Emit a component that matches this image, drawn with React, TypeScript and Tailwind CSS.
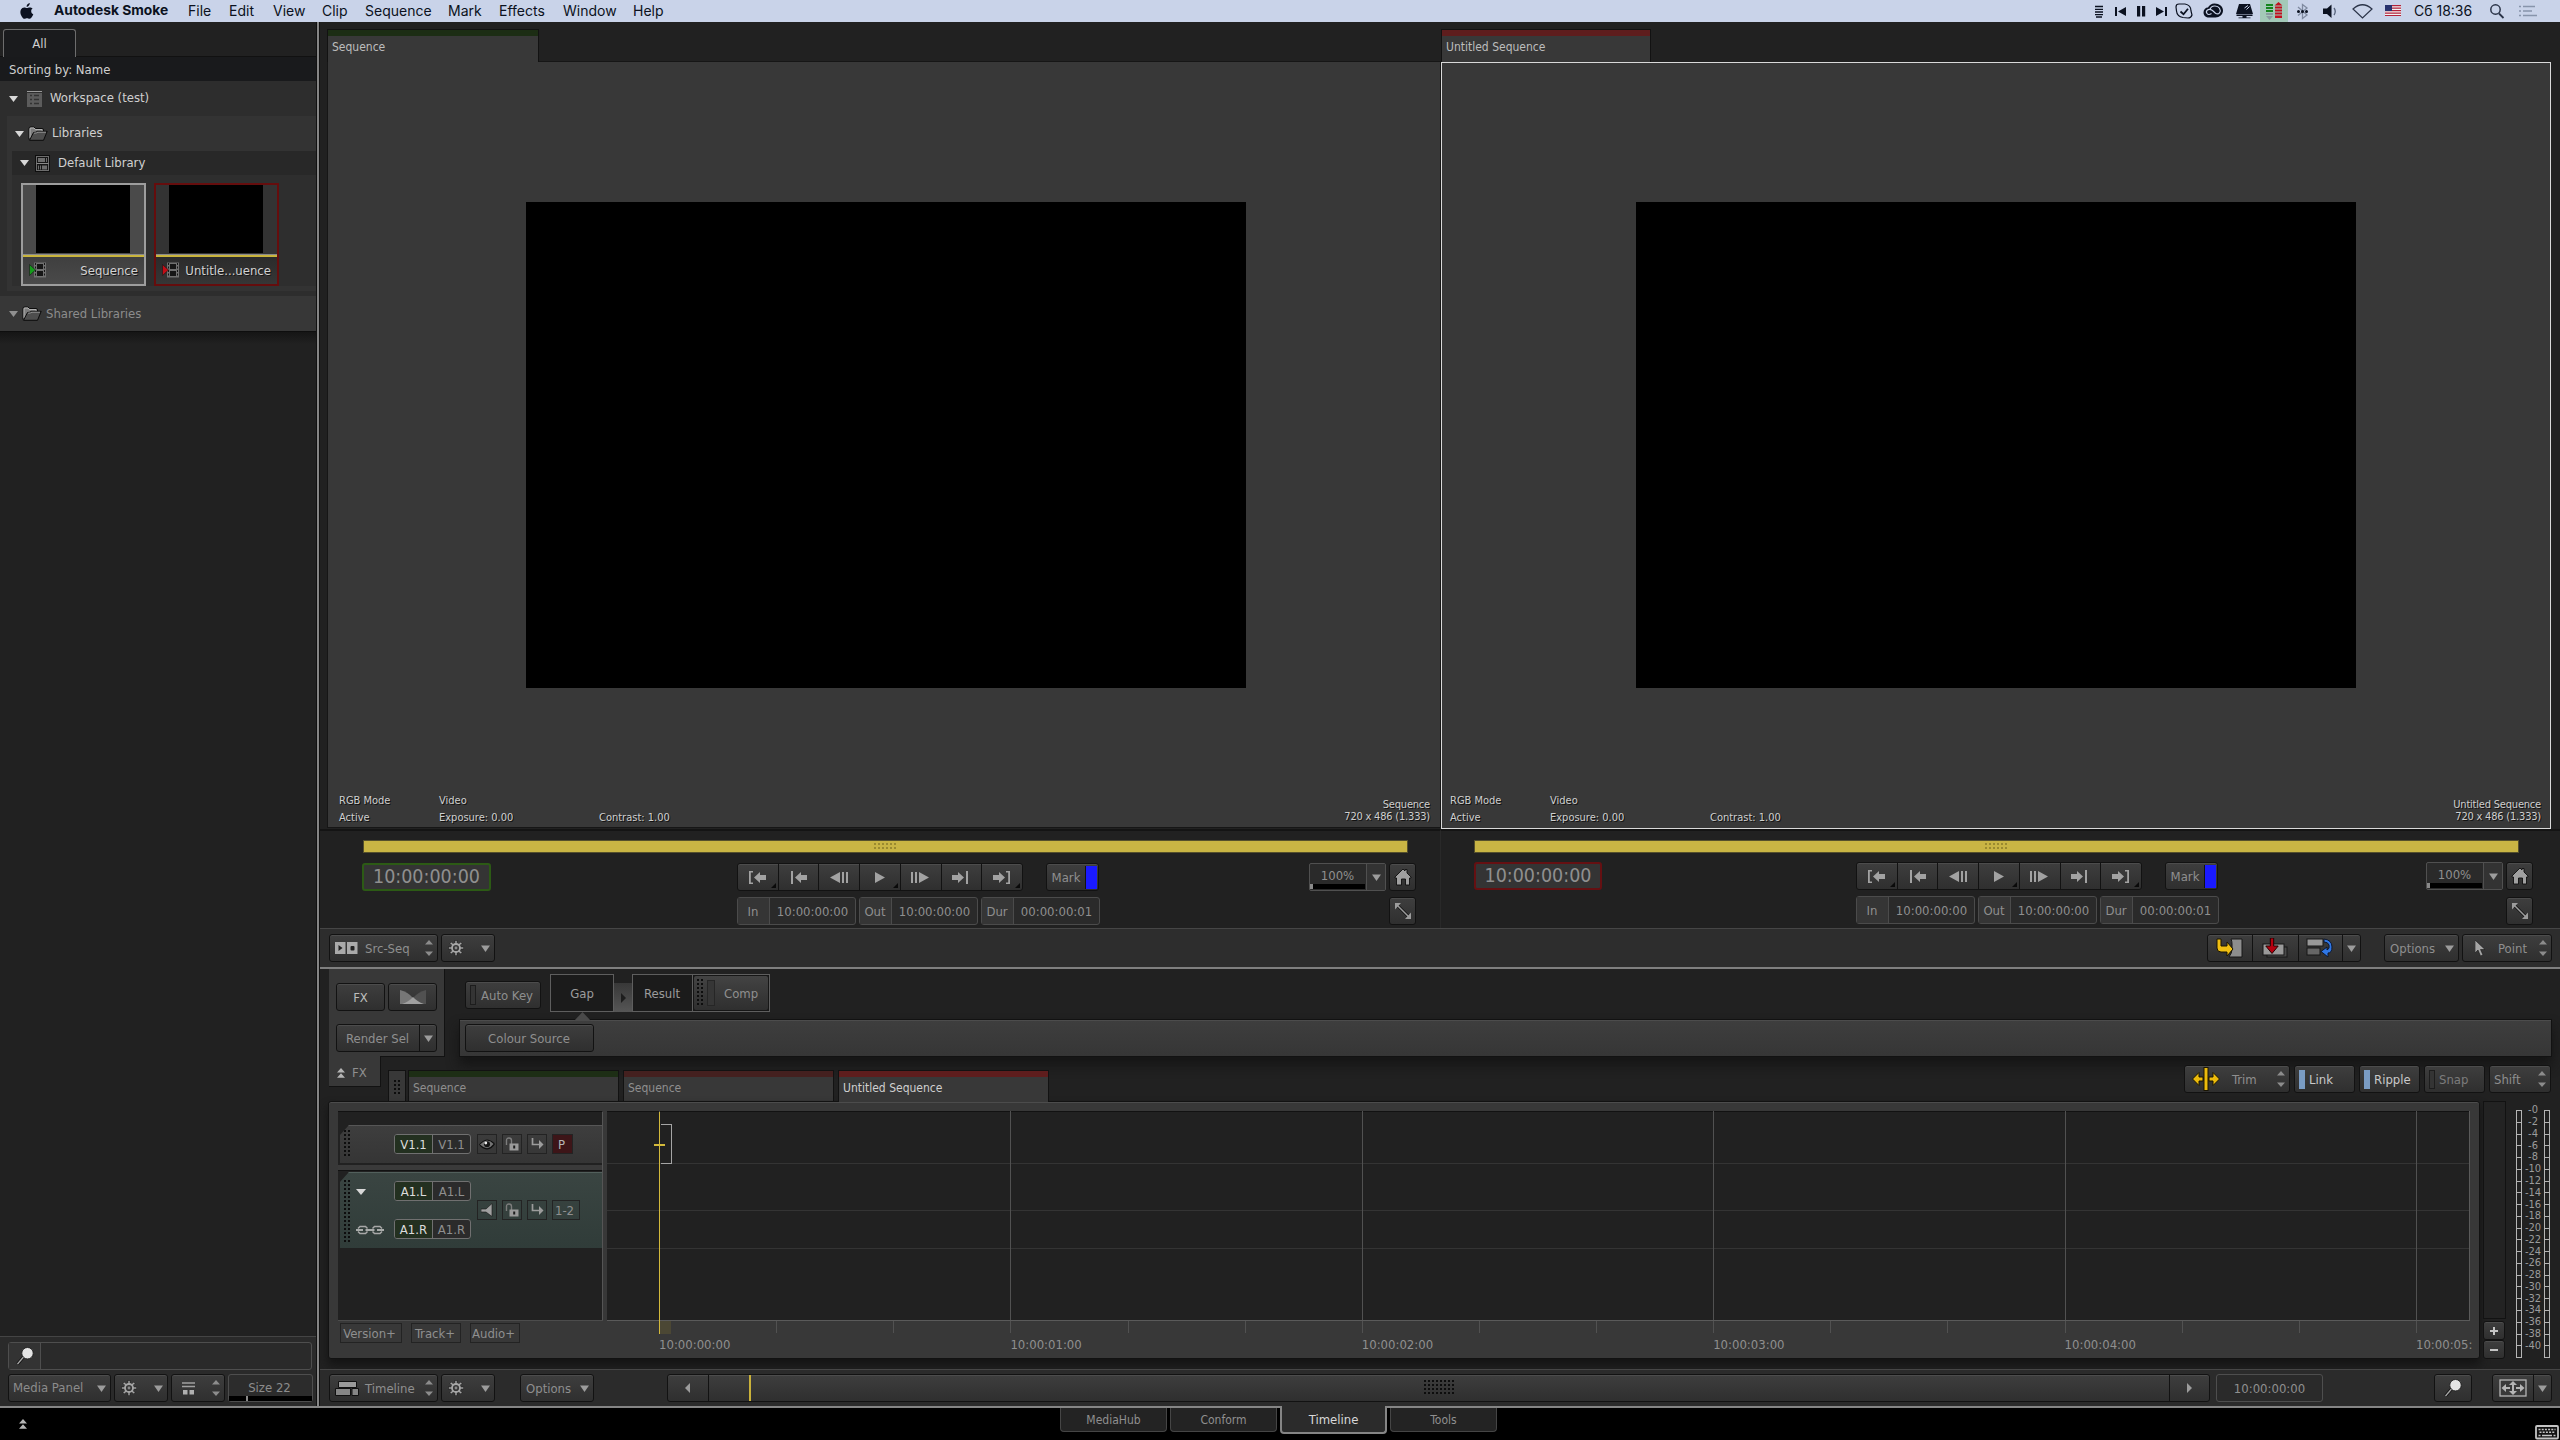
import type { ReactNode } from 'react';
import clsx from 'clsx';

const MENU: [string, string][] = [
  ['File', 'w-[41px]'],
  ['Edit', 'w-[44px]'],
  ['View', 'w-[49px]'],
  ['Clip', 'w-[43px]'],
  ['Sequence', 'w-[83px]'],
  ['Mark', 'w-[51px]'],
  ['Effects', 'w-[64px]'],
  ['Window', 'w-[70px]'],
  ['Help', 'w-[60px]'],
];

const METER = Array.from({ length: 21 }, (_, i) => `-${i * 2}`);
const SECONDS = ['10:00:00:00', '10:00:01:00', '10:00:02:00', '10:00:03:00', '10:00:04:00', '10:00:05:'];
const SECOND_W = 351.4;
const ORIGIN = 52;

/* ---------- primitives ---------- */

function Btn({ className, children }: { className?: string; children?: ReactNode }) {
  return (
    <div
      className={clsx(
        'flex items-center shrink-0 h-7 rounded-[3px] border border-[#121212] bg-linear-to-b from-[#3e3e3e] to-[#2f2f2f] shadow-[inset_0_1px_0_#4c4c4c]',
        className,
      )}
    >
      {children}
    </div>
  );
}

function Down({ className }: { className?: string }) {
  return (
    <svg className={clsx('shrink-0', className)} width="9" height="7" viewBox="0 0 9 7">
      <path d="M0 0.5h9L4.500 7z" fill="#9c9c9c" />
    </svg>
  );
}

function UpDown({ className }: { className?: string }) {
  return (
    <svg className={clsx('shrink-0', className)} width="8" height="16" viewBox="0 0 8 16">
      <path d="M4 0l4 4.500H0zM4 16l4-4.500H0z" fill="#8c8c8c" />
    </svg>
  );
}

function DoubleUp() {
  return (
    <svg className="shrink-0" width="8" height="10" viewBox="0 0 8 10">
      <path d="M4 0l4 4.500H0zM4 5.200l4 4.500H0z" fill="#b5b5b5" />
    </svg>
  );
}

function Gear() {
  const spokes = [0, 45, 90, 135, 180, 225, 270, 315];
  return (
    <svg className="shrink-0" width="16" height="16" viewBox="0 0 16 16">
      <g fill="#a6a6a6" stroke="#141414" strokeWidth="0.5">
        {spokes.map(a => (
          <rect key={a} x="7" y="0.5" width="2" height="4" transform={`rotate(${a} 8 8)`} />
        ))}
      </g>
      <circle cx="8" cy="8" r="4" fill="none" stroke="#a6a6a6" strokeWidth="1.800" />
      <circle cx="8" cy="8" r="1.400" fill="#8a8a8a" />
    </svg>
  );
}

function GearMenu({ className }: { className?: string }) {
  return (
    <Btn className={clsx('w-[54px] pl-[6px] pr-[4px] justify-between', className)}>
      <Gear />
      <Down />
    </Btn>
  );
}

function Dots({ cols, rows, gap = 4, color = '#0d0d0d', className }: { cols: number; rows: number; gap?: number; color?: string; className?: string }) {
  const cells = [];
  for (let y = 0; y < rows; y++) {
    for (let x = 0; x < cols; x++) {
      cells.push(<rect key={`${x}-${y}`} x={x * gap} y={y * gap} width="2" height="2" fill={color} />);
    }
  }
  return (
    <svg className={clsx('shrink-0', className)} width={cols * gap} height={rows * gap}>
      {cells}
    </svg>
  );
}

function Magnifier() {
  return (
    <svg className="shrink-0" width="18" height="18" viewBox="0 0 18 18">
      <path d="M1.500 17L7.500 10" stroke="#111" strokeWidth="3" />
      <path d="M1.500 17L7.500 10" stroke="#a8a8a8" strokeWidth="1.300" />
      <circle cx="11.500" cy="6.200" r="5.700" fill="#e4e4e4" stroke="#161616" strokeWidth="0.8" />
    </svg>
  );
}

function Folder() {
  return (
    <svg className="shrink-0" width="20" height="15" viewBox="0 0 20 15">
      <path d="M1 13.500V2.500Q1 1 2.500 1H6l1.500 1.500H14q1.500 0 1.500 1.500v2" fill="#7d7d7d" stroke="#0c0c0c" />
      <path d="M2 12V3q0-1 1-1h3l1.500 1.600H14v1.500" fill="none" stroke="#bdbdbd" strokeWidth="0.9" />
      <path d="M1.500 14.300L5.500 6.500q2.500 0 4-1.200h9.700l-3.700 9z" fill="#4e4e4e" stroke="#0c0c0c" />
      <path d="M6 7.200q2.500 0 4-1h8" fill="none" stroke="#a5a5a5" strokeWidth="0.8" />
    </svg>
  );
}

/* ---------- menu bar ---------- */

function MenuBar() {
  return (
    <div className="h-[22px] shrink-0 flex items-center bg-[#c9d3e9] font-['Inter','Roboto',sans-serif] text-[14px] leading-none text-[#0b1120]">
      <svg className="ml-[20px] shrink-0" width="14" height="17" viewBox="0 0 14 17">
        <path
          d="M9.800 0c.1 1-.3 1.900-.9 2.600C8.300 3.400 7.400 3.900 6.600 3.800 6.500 2.900 6.900 2 7.500 1.300 8.100.6 9 .1 9.800 0zM12.600 5.600C11.700 6.200 11.200 7.100 11.200 8.200c0 1.500.9 2.500 2.100 3-.3.9-.7 1.800-1.300 2.600-.7 1-1.400 2-2.500 2-1 0-1.300-.6-2.500-.6s-1.600.6-2.500.6c-1.100 0-1.900-1-2.600-2.100C.4 11.500-.2 8.500 1 6.400 1.700 5.200 2.900 4.400 4.200 4.400c1.100 0 1.900.7 2.800.7.800 0 1.700-.8 3-.7.600 0 1.800.2 2.600 1.200z"
          fill="#0b1120"
        />
      </svg>
      <span className="ml-[20px] w-[134px] shrink-0 font-bold text-[13.8px]">Autodesk Smoke</span>
      {MENU.map(([label, w]) => (
        <span key={label} className={clsx('shrink-0', w)}>{label}</span>
      ))}
      <svg className="ml-auto shrink-0" width="319" height="22" viewBox="0 0 319 22">
        <path d="M0 6.500h8M0 9.300h8M0 12h8M0 14.700h8M1 17h6" stroke="#0b1120" strokeWidth="1.300" />
        <path d="M20 7h2v9h-2zM31 7v9l-8-4.500zM42 6h3.200v10.500H42zM47 6h3.200v10.500H47zM61 7v9l8-4.500zM70 7h2v9h-2z" fill="#0b1120" />
        <path d="M84 4h6q6 1 6 7l1 4q-1 3-4 3l-5-.5q-6-1-6.500-6.500L81 7q0-3 3-3z" fill="none" stroke="#0b1120" strokeWidth="1.200" />
        <path d="M85.500 11.500l3 2.700 4.500-5.500" fill="none" stroke="#0b1120" strokeWidth="1.800" />
        <path d="M108.500 12.500c0-3 2-5 4.500-5 1-2 3.500-4 6.500-4 5 0 8.500 3 8.500 7s-3.500 7-7.500 7H114c-3 0-5.500-2-5.500-5z" fill="#0b1120" />
        <g fill="none" stroke="#c9d3e9" strokeWidth="1.200">
          <path d="M116.500 13.500q-3 2-4.500 0t.5-3.500 5 .5l3 2.800q2.500 1.500 4-.5t0-4.500-5-2.300-4.500 3.500" />
        </g>
        <path d="M144 4h11l3 10h-17zM141.500 14.500h16v1.500h-6v1.500h4v.8h-12v-.8h4V16h-6z" fill="#0b1120" />
        <path d="M149.500 8l3.500-2.500M151.500 9.500l3-3" stroke="#c9d3e9" />
        <rect x="165" width="28" height="22" fill="#a3c9b8" />
        <g fill="#15851d">
          <rect x="171" y="4" width="7" height="2" />
          <rect x="171" y="7" width="7" height="2" />
          <rect x="171" y="10" width="7" height="2" />
        </g>
        <path d="M171 13h7v2h-7zM171 16h7l-3.500 4z" fill="#8a9aa0" />
        <path d="M183.500 2l4 3.500h-8zM180 6.500h7v2h-7zM180 9.500h7v2h-7zM180 12.500h7v2h-7zM180 15.500h7v2.500h-7z" fill="#c20f1f" />
        <path d="M203 7l9 8-4.500 3.500v-14L212 8l-9 7.500" fill="none" stroke="#7f8aa0" strokeWidth="1.300" />
        <g fill="#0b1120">
          <circle cx="203.500" cy="11.500" r="1.500" />
          <circle cx="207.500" cy="11.500" r="1.500" />
          <circle cx="211.500" cy="11.500" r="1.500" />
          <path d="M228 8.500h4l4.500-4v13.500l-4.500-4h-4z" />
        </g>
        <path d="M239 8q2.500 3.500 0 7" fill="none" stroke="#56627a" strokeWidth="1.300" />
        <path d="M258 9q9.500-8.500 19 0l-9.500 9z" fill="none" stroke="#2b3448" strokeWidth="1.200" />
        <rect x="290" y="5" width="16" height="11" fill="#f2f2f2" />
        <path d="M290 5.700h16M290 8.200h16M290 10.700h16M290 13.100h16M290 15.500h16" stroke="#b3213a" strokeWidth="1.200" />
        <rect x="290" y="5" width="7" height="6" fill="#27326e" />
      </svg>
      <span className="w-[76px] shrink-0">Сб 18:36</span>
      <svg className="mr-[6px] shrink-0" width="64" height="22" viewBox="0 0 64 22">
        <circle cx="5.500" cy="9.500" r="4.700" fill="none" stroke="#2b3448" strokeWidth="1.500" />
        <path d="M9 13.500l4.500 4.500" stroke="#2b3448" strokeWidth="1.800" />
        <path d="M29 6.500h2M33 6.500h12M29 11h2M33 11h9M29 15.500h2M33 15.500h14" stroke="#8794ab" strokeWidth="1.700" />
      </svg>
    </div>
  );
}

/* ---------- media panel ---------- */

function Thumb({ name, selected }: { name: string; selected?: boolean }) {
  return (
    <div className={clsx('w-[125px] h-[103px] border-2 flex flex-col', selected ? 'border-[#9d9d9d] bg-[#4a4a4a]' : 'border-[#650d0d] bg-[#333333]')}>
      <div className="h-[68px] pl-[13px] pr-[14px]">
        <div className="h-full bg-black" />
      </div>
      <div className="h-[3px] mt-px border-t border-[#8a8a8a] bg-[#c9b43c]" />
      <div className={clsx('flex-1 flex items-center pl-[6px] pr-[6px] pb-px text-[13px] leading-none text-[#d2d2d2] [text-shadow:1px_1px_0_#161616]', selected ? 'bg-linear-to-b from-[#3f3f3f] to-[#4a4a4a]' : 'bg-linear-to-b from-[#2b2b2b] to-[#363636]')}>
        <svg className="shrink-0" width="17" height="16" viewBox="0 0 17 16">
          <rect x="5" y="0.5" width="12" height="15" fill="#707070" />
          <rect x="8" y="2" width="6" height="5" fill="#161616" />
          <rect x="8" y="9" width="6" height="5" fill="#161616" />
          <path d="M6.500 1v14M15.500 1v14" stroke="#161616" strokeDasharray="2 1.500" />
          <path d="M0.500 2.500v11L6.500 8z" fill={selected ? '#169a1c' : '#c20d16'} stroke="#161616" strokeWidth="0.6" />
        </svg>
        <span className="ml-auto">{name}</span>
      </div>
    </div>
  );
}

function Sidebar() {
  return (
    <div className="w-[317px] shrink-0 flex flex-col border-r border-[#111] bg-[#212121] text-[13px] text-[#d0d0d0]">
      <div className="h-[35px] shrink-0 flex items-end pl-[3px] border-b border-[#111]">
        <div className="w-[73px] h-[28px] -mb-px pt-px flex items-center justify-center rounded-t-[3px] border border-b-0 border-[#6d6d6d] bg-[#1a1b1d]">All</div>
      </div>
      <div className="h-[24px] shrink-0 flex items-center pl-[9px] pt-px bg-[#191a1c]">Sorting by: Name</div>
      <div className="h-[215px] shrink-0 flex flex-col bg-[#2d2d2d]">
        <div className="h-[35px] flex items-center pl-[9px]">
          <svg width="9" height="6"><path d="M0 0h9L4.500 6z" fill="#d8d8d8" /></svg>
          <svg className="ml-[9px]" width="15" height="16" viewBox="0 0 15 16">
            <rect width="15" height="1" fill="#9a9a9a" />
            <rect y="2" width="15" height="14" fill="#5c5c5c" />
            <path d="M3 4.500h2M7 4.500h5M3 8.500h2M7 8.500h5M3 12.500h2M7 12.500h5" stroke="#333" strokeWidth="1.500" />
          </svg>
          <span className="ml-[8px] pb-px">Workspace (test)</span>
        </div>
        <div className="ml-[7px] h-[175px] bg-[#333333]">
          <div className="h-[35px] flex items-center pl-[8px]">
            <svg width="9" height="6"><path d="M0 0h9L4.500 6z" fill="#d8d8d8" /></svg>
            <span className="ml-[4px]"><Folder /></span>
            <span className="ml-[4px] pb-px">Libraries</span>
          </div>
          <div className="ml-[5px] h-[135px] bg-[#2e2e2e]">
            <div className="h-[24px] flex items-center pl-[8px] bg-[#282828]">
              <svg width="9" height="6"><path d="M0 0h9L4.500 6z" fill="#d8d8d8" /></svg>
              <svg className="ml-[6px]" width="15" height="17" viewBox="0 0 15 17">
                <rect width="15" height="17" fill="#0e0e0e" />
                <rect x="1.500" y="1.500" width="12" height="14" fill="#161616" stroke="#6d6d6d" />
                <rect x="3" y="3" width="7" height="4" fill="#6d6d6d" />
                <path d="M11.500 3v4M3.500 10.500v4M5.500 10.500v4" stroke="#6d6d6d" />
                <path d="M1.500 8.500h12" stroke="#8a8a8a" />
                <rect x="7" y="10.500" width="5" height="4" fill="#6d6d6d" />
              </svg>
              <span className="ml-[8px]">Default Library</span>
            </div>
            <div className="flex gap-[8px] pt-[8px] pl-[9px]">
              <Thumb name="Sequence" selected />
              <Thumb name="Untitle...uence" />
            </div>
          </div>
        </div>
      </div>
      <div className="h-[36px] shrink-0 flex items-center pl-[9px] border-b border-[#0e0e0e] bg-[#373737] text-[#8c8c8c]">
        <svg width="9" height="6"><path d="M0 0h9L4.500 6z" fill="#909090" /></svg>
        <span className="ml-[4px]"><Folder /></span>
        <span className="ml-[4px]">Shared Libraries</span>
      </div>
      <div className="h-[12px] shrink-0 bg-linear-to-b from-[#151515] to-[#212121]" />
      <div className="mt-auto h-[70px] shrink-0 border-t border-[#444] bg-[#2a2a2a] pl-[8px] pt-[5px] text-[#8c8c8c]">
        <div className="w-[304px] h-7 flex rounded-[3px] border border-[#4e4e4e] bg-[#2a2a2a]">
          <div className="w-[32px] flex items-center pl-[7px] pb-px border-r border-[#4e4e4e] bg-[#333]"><Magnifier /></div>
        </div>
        <div className="flex mt-[4px]">
          <Btn className="w-[103px] pl-[4px] pr-[4px] justify-between">Media Panel<Down /></Btn>
          <GearMenu className="ml-[3px]" />
          <Btn className="w-[54px] ml-[3px] pl-[10px] pr-[4px] justify-between">
            <svg width="13" height="13" viewBox="0 0 13 13">
              <path d="M0 1h13M0 4.500h13" stroke="#a0a0a0" strokeWidth="1.600" />
              <path d="M1 8h4.500v4.500H1zM7.500 8H12v4.500H7.500z" fill="#b0b0b0" />
            </svg>
            <UpDown />
          </Btn>
          <div className="w-[85px] h-7 ml-[3px] flex flex-col rounded-[3px] border border-[#4e4e4e] bg-[#2c2c2c]">
            <div className="flex-1 flex items-end justify-center pb-[2px] pr-[2px] leading-none">Size 22</div>
            <div className="h-[5px] bg-black pl-[17px]"><div className="w-[2px] h-full bg-[#8a8a8a]" /></div>
          </div>
        </div>
      </div>
    </div>
  );
}

/* ---------- viewers ---------- */

function Viewer({ name, active }: { name: string; active?: boolean }) {
  return (
    <div className={clsx('h-[767px] flex flex-col border bg-[#383838] text-[11px] leading-none text-[#cfcfcf] [text-shadow:1px_1px_0_#111]', active ? 'w-[1110px] mt-px border-[#d9d9d9]' : 'w-[1114px] border-[#161616]')}>
      <div className={clsx('w-[720px] h-[486px] bg-black', active ? 'ml-[194px] mt-[139px]' : 'ml-[198px] mt-[140px]')} />
      <div className={clsx('mt-auto flex items-end', active ? 'pl-[8px] pr-[9px] h-[39px] pb-[5px]' : 'pl-[11px] pr-[10px] h-[40px] pb-[4px]')}>
        <div className="w-[100px] flex flex-col gap-[6px]"><span>RGB Mode</span><span>Active</span></div>
        <div className="w-[160px] flex flex-col gap-[6px]"><span>Video</span><span>Exposure: 0.00</span></div>
        <span>Contrast: 1.00</span>
        <div className="ml-auto flex flex-col items-end gap-px pb-px tracking-[-0.2px]"><span>{name}</span><span>720 x 486 (1.333)</span></div>
      </div>
    </div>
  );
}

const TRANSPORT = [
  'M1 1h4v1.500H2.800v10H5V14H1zM6 7.500L12 2v3h6v5h-6v3z',
  'M2 1h2v13H2zM6 7.500L12 2v3h6v5h-6v3z',
  'M0 7.500L10 2v11zM12 2h2v11h-2zM16 2h2v11h-2z',
  'M4 2l10 5.500L4 13z',
  'M0 2h2v11H0zM4 2h2v11H4zM8 2l10 5.500L8 13z',
  'M0 5h6V2l6 5.500L6 13v-3H0zM14 1h2v13h-2z',
  'M0 5h6V2l6 5.500L6 13v-3H0zM13 1h4v13h-4v-1.500h2.200v-10H13z',
];

function TimeField({ label, value }: { label: string; value: string }) {
  return (
    <div className="w-[119px] h-7 flex rounded-[3px] border border-[#4b4b4b] bg-[#2a2a2a]">
      <div className="w-[32px] pr-px flex items-center justify-center border-r border-[#4b4b4b] bg-[#353535]">{label}</div>
      <div className="flex-1 flex items-center justify-center">{value}</div>
    </div>
  );
}

function ViewerControls({ active }: { active?: boolean }) {
  return (
    <div className={clsx('h-[99px] border-t-2 border-t-[#141414] text-[13px] leading-none text-[#8f8f8f]', active ? 'w-[1119px] pl-[33px]' : 'w-[1121px] pl-[43px] border-r border-r-[#292929]')}>
      <div className="w-[1045px] h-[13px] mt-[9px] flex items-center justify-center border border-[#55502c] bg-[#c9b544]">
        <Dots cols={6} rows={2} color="#9a8a30" />
      </div>
      <div className={clsx('flex', active ? 'mt-[9px]' : 'mt-[10px] -ml-px')}>
        <div className={clsx('h-7 flex items-center justify-center rounded-[3px] border-2 bg-[#343434] text-[19.5px]', active ? 'w-[128px] border-[#651012]' : 'w-[129px] border-[#2c5a15]')}>10:00:00:00</div>
        <div className={clsx('flex flex-col gap-[6px]', active ? 'ml-[254px]' : 'ml-[246px]')}>
          <div className="flex">
            <div className="w-[286px] h-7 flex rounded-[3px] border border-[#121212] bg-linear-to-b from-[#3e3e3e] to-[#2f2f2f] shadow-[inset_0_1px_0_#4c4c4c]">
              {TRANSPORT.map((d, i) => (
                <div key={i} className="relative flex-1 flex items-center justify-center pr-px border-r border-[#121212] last:border-r-0">
                  <svg width="18" height="15" viewBox="0 0 18 15"><path d={d} fill="#a2a2a2" /></svg>
                  {(i === 0 || i === 3 || i === 6) && (
                    <svg className="absolute right-[2px] bottom-[2px]" width="5" height="5"><path d="M5 0v5H0z" fill="#0a0a0a" /></svg>
                  )}
                </div>
              ))}
            </div>
            <Btn className="ml-[23px] w-[53px]">
              <span className="flex-1 text-center">Mark</span>
              <div className="w-[12px] h-[23px] mr-px border-l border-[#121212] bg-[#1a1aff]" />
            </Btn>
          </div>
          <div className="flex gap-[3px]">
            <TimeField label="In" value="10:00:00:00" />
            <TimeField label="Out" value="10:00:00:00" />
            <TimeField label="Dur" value="00:00:00:01" />
          </div>
        </div>
        <div className={clsx('flex flex-col', active ? 'ml-[207px] gap-[7px]' : 'ml-[209px] gap-[6px]')}>
          <div className="flex gap-[3px]">
            <div className="w-[77px] h-7 flex rounded-[2px] border border-[#505050] bg-[#2a2a2a]">
              <div className="flex-1 flex flex-col">
                <div className="flex-1 flex items-end justify-center pb-[2px] pr-px">100%</div>
                <div className="h-[5px] mr-px mb-px bg-black"><div className="w-[3px] h-full bg-[#8a8a8a]" /></div>
              </div>
              <div className="w-[19px] flex items-center justify-center border-l border-[#505050] bg-[#333]"><Down /></div>
            </div>
            <Btn className="w-[27px] justify-center">
              <svg width="18" height="18" viewBox="0 0 18 18">
                <path d="M1 9L9 1l2 2V1.500h2V5l4 4v1h-1.500v7h-4v-6h-4v6h-5v-7H1z" fill="#a0a0a0" stroke="#0e0e0e" strokeWidth="0.9" />
              </svg>
            </Btn>
          </div>
          <Btn className="w-[27px] ml-[80px] justify-center">
            <svg width="18" height="18" viewBox="0 0 18 18">
              <path d="M3 3l12 12" stroke="#111" strokeWidth="3" />
              <path d="M3 3l12 12" stroke="#9c9c9c" strokeWidth="1.500" />
              <path d="M1 1h6L1 7.500zM17 17v-6.500L11 17z" fill="#9c9c9c" />
            </svg>
          </Btn>
        </div>
      </div>
    </div>
  );
}

function ViewerToolbar() {
  return (
    <div className="h-[39px] shrink-0 flex items-center border-t border-[#464646] bg-[#2d2d2d] pl-[9px] pr-[8px] text-[13px] leading-none text-[#8f8f8f]">
      <Btn className="w-[109px] pl-[5px] pr-[4px]">
        <svg width="23" height="12" viewBox="0 0 23 12">
          <path d="M0 0h10.500v12H0zM12 0h10.500v12H12z" fill="#aaa" />
          <path d="M3.500 3l4 3-4 3z" fill="#222" />
          <rect x="15.500" y="4" width="4" height="4.500" rx="1" fill="#222" />
        </svg>
        <span className="ml-[7px]">Src-Seq</span>
        <UpDown className="ml-auto" />
      </Btn>
      <GearMenu className="ml-[3px]" />
      <div className="ml-auto w-[154px] h-7 flex rounded-[3px] border border-[#121212] bg-linear-to-b from-[#3e3e3e] to-[#2f2f2f] shadow-[inset_0_1px_0_#4c4c4c]">
        <div className="w-[45px] pr-[2px] flex items-center justify-center border-r border-[#121212]">
          <svg width="27" height="20" viewBox="0 0 27 20">
            <path d="M15 1h11v18H13q3-4 3-8V6q0-3-1-5z" fill="#8d8d8d" stroke="#161616" />
            <path d="M1 1h4v7h6V4l6 7-6 7v-4H5q-4 0-4-4z" fill="#f0bf12" stroke="#1b1500" />
          </svg>
        </div>
        <div className="w-[46px] pr-[2px] flex items-center justify-center border-r border-[#121212]">
          <svg width="26" height="20" viewBox="0 0 26 20">
            <rect x="5" y="9" width="20" height="10" fill="#4a4a4a" stroke="#161616" />
            <rect x="1" y="6" width="21" height="11" fill="#9a9a9a" stroke="#161616" />
            <path d="M8.300 0h3.400v8h4.500L10 15.500 3.800 8h4.500z" fill="#b5000f" stroke="#200" />
          </svg>
        </div>
        <div className="w-[44px] pr-[2px] flex items-center justify-center border-r border-[#121212]">
          <svg width="27" height="20" viewBox="0 0 27 20">
            <rect x="1" y="1" width="16" height="7" fill="#999" stroke="#161616" />
            <rect x="1" y="10" width="13" height="7" fill="#666" stroke="#161616" />
            <path d="M18 1q8 1 8 8 0 6-4 6v4l-7-5.500 6-4.500v3q3-1 2-5-1-3-5-3z" fill="#2f77e6" stroke="#0d1830" />
          </svg>
        </div>
        <div className="flex-1 flex items-center justify-center"><Down /></div>
      </div>
      <Btn className="ml-[23px] w-[75px] pl-[5px] pr-[4px] justify-between">Options<Down /></Btn>
      <Btn className="ml-[3px] w-[90px] pl-[12px] pr-[4px]">
        <svg width="10" height="16" viewBox="0 0 10 16"><path d="M0 0v13l3-3 2.500 6 2.500-1-2.500-5.500H10z" fill="#a5a5a5" stroke="#161616" strokeWidth="0.6" /></svg>
        <span className="ml-[13px]">Point</span>
        <UpDown className="ml-auto" />
      </Btn>
    </div>
  );
}

/* ---------- effects ribbon ---------- */

function FxArea() {
  return (
    <div className="h-[88px] shrink-0 flex pl-[9px] text-[13px] leading-none text-[#8f8f8f]">
      <div className="w-[116px] border-r border-b border-[#121212] bg-[#383838] pl-[7px] pt-[14px]">
        <div className="flex gap-[3px]">
          <Btn className="w-[49px] justify-center text-[#bdbdbd]">FX</Btn>
          <Btn className="w-[49px] justify-center">
            <svg width="26" height="14" viewBox="0 0 26 14">
              <path d="M0 0q8 2 13 8l-8 6H0z" fill="#777" />
              <path d="M26 0q-8 2-13 8l8 6h5z" fill="#515151" />
              <path d="M13 7q4 4.500 11 7H2q7-2.500 11-7z" fill="#a0a0a0" />
            </svg>
          </Btn>
        </div>
        <Btn className="w-[101px] mt-[13px]">
          <span className="flex-1 text-center pr-px">Render Sel</span>
          <div className="w-[17px] h-full flex items-center justify-center border-l border-[#121212]"><Down /></div>
        </Btn>
      </div>
      <div className="ml-[14px] flex flex-col">
        <div className="h-[50px] flex pl-[6px] pt-[5px]">
          <Btn className="w-[76px] mt-[7px] pl-[4px] pr-[2px]">
            <div className="w-[6px] h-[20px] border border-[#1d1d1d] bg-[#343434]" />
            <span className="flex-1 text-center">Auto Key</span>
          </Btn>
          <div className="relative ml-[9px] w-[64px] h-[38px] flex items-center justify-center border border-[#5e5e5e] bg-[#1b1b1b] text-[#9c9c9c]">
            Gap
            <svg className="absolute -bottom-[10px] left-[23px]" width="17" height="9"><path d="M8.500 0L17 9H0z" fill="#4a4a4a" /></svg>
          </div>
          <div className="w-[18px] h-[29px] mt-[9px] flex items-center justify-center bg-linear-to-b from-[#383838] to-[#565656]">
            <svg width="5" height="10"><path d="M0 0l5 5-5 5z" fill="#1d1d1d" /></svg>
          </div>
          <div className="w-[60px] h-[38px] pr-px flex items-center justify-center border border-r-0 border-[#5e5e5e] bg-[#1b1b1b] text-[#9c9c9c]">Result</div>
          <div className="w-[78px] h-[38px] p-px border border-[#5e5e5e] bg-[#161616]">
            <div className="h-full flex items-center rounded-[2px] bg-linear-to-b from-[#434343] to-[#2f2f2f] pl-[3px]">
              <Dots cols={2} rows={7} />
              <div className="ml-[2px] w-[8px] h-[26px] border border-[#262626] bg-[#363636]" />
              <span className="ml-[9px]">Comp</span>
            </div>
          </div>
        </div>
        <div className="w-[2093px] h-[38px] flex items-center border border-[#121212] bg-linear-to-b from-[#3e3e3e] to-[#363636] shadow-[inset_0_1px_0_#4c4c4c,0_8px_12px_#151515] pl-[5px]">
          <Btn className="w-[129px] justify-center pr-px">Colour Source</Btn>
        </div>
      </div>
    </div>
  );
}

function SeqTab({ label, strip, active }: { label: string; strip: string; active?: boolean }) {
  return (
    <div className={clsx('w-[211px] border border-b-0 border-[#121212] bg-[#383838]', active ? 'h-[32px] -mb-px z-10 text-[#cfcfcf]' : 'h-[31px] text-[#8f8f8f]')}>
      <div className={clsx('h-[6px]', strip)} />
      <div className="pl-[4px] pt-[5px]">{label}</div>
    </div>
  );
}

function LedBtn({ label, on }: { label: string; on?: boolean }) {
  return (
    <Btn className={clsx('w-[61px] pl-[4px]', on ? 'text-[#c9c9c9]' : 'text-[#7c7c7c]')}>
      <div className={clsx('w-[6px] h-[19px]', on ? 'bg-[#7a9cc4]' : 'border border-[#1d1d1d] bg-[#343434]')} />
      <span className="ml-[4px]">{label}</span>
    </Btn>
  );
}

function TimelineTabs() {
  return (
    <div className="h-[44px] shrink-0 flex items-end pl-[9px] pr-[9px] text-[13px] leading-none text-[#8f8f8f]">
      <div className="w-[52px] h-[31px] -mt-px pt-[3px] self-start flex items-center pl-[8px] gap-[7px] border-r border-b border-[#121212] bg-[#383838]">
        <DoubleUp />
        <span>FX</span>
      </div>
      <div className="ml-[7px] w-[18px] h-[31px] pt-[4px] pl-[2px] flex items-center justify-center border border-b-0 border-[#121212] bg-[#383838]"><Dots cols={2} rows={4} /></div>
      <div className="ml-[2px] flex items-start gap-[4px] text-[12px]">
        <SeqTab label="Sequence" strip="bg-[#1d2e15]" />
        <SeqTab label="Sequence" strip="bg-[#44201f]" />
        <SeqTab label="Untitled Sequence" strip="bg-[#5e1d1d]" active />
      </div>
      <div className="ml-auto mb-[8px] flex gap-[4px]">
        <Btn className="w-[106px] pl-[7px] pr-[4px]">
          <svg width="28" height="24" viewBox="0 0 28 24">
            <path d="M0.500 12L7 5.500V10h4v4H7v4.500zM27.500 12L21 5.500V10h-4v4h4v4.500z" fill="#ecbb0c" stroke="#1b1500" />
            <rect x="12" y="0.5" width="4" height="23" fill="#ecbb0c" stroke="#1b1500" />
          </svg>
          <span className="ml-[12px]">Trim</span>
          <UpDown className="ml-auto" />
        </Btn>
        <LedBtn label="Link" on />
        <LedBtn label="Ripple" on />
        <LedBtn label="Snap" />
        <Btn className="w-[62px] pl-[4px] pr-[4px] justify-between">Shift<UpDown /></Btn>
      </div>
    </div>
  );
}

/* ---------- timeline ---------- */

function Patch({ name }: { name: string }) {
  return (
    <div className="w-[77px] h-[20px] flex items-center rounded-[3px] border border-[#707070] bg-[#2b2b2b] overflow-hidden leading-none">
      <div className="w-[38px] h-full flex items-center justify-center border-r border-[#707070] bg-[#233020] text-[#dcdcdc]">{name}</div>
      <div className="flex-1 text-center">{name}</div>
    </div>
  );
}

function MiniBtn({ className, children }: { className?: string; children: ReactNode }) {
  return <div className={clsx('h-[20px] flex items-center justify-center border border-[#232323] leading-none', className ?? 'w-[20px]')}>{children}</div>;
}

function LockIcon() {
  return (
    <svg width="14" height="14" viewBox="0 0 14 14">
      <path d="M1.500 8V3.500Q1.500 1 4 1t2.500 2.500V7" fill="none" stroke="#7d7d7d" strokeWidth="1.400" />
      <rect x="4.500" y="6.500" width="9" height="7" fill="#9a9a9a" />
      <path d="M8.200 8.500h2v3h-2z" fill="#1c1c1c" />
    </svg>
  );
}

function SyncIcon() {
  return (
    <svg width="13" height="12" viewBox="0 0 13 12">
      <path d="M1.500 0v6.500H8" fill="none" stroke="#9c9c9c" strokeWidth="1.700" />
      <path d="M8 2l4.500 4.500L8 11z" fill="#9c9c9c" />
    </svg>
  );
}

function TrackList() {
  return (
    <div className="w-[265px] flex flex-col">
      <div className="h-[209px] border-t border-r border-t-[#121212] border-r-[#555] bg-[#212121]">
        <div className="h-[52px] pt-[13px] pl-[2px]">
          <div className="h-[38px] flex items-center bg-linear-to-b from-[#3e3e3e] to-[#353535] shadow-[inset_0_1px_0_#565656] [clip-path:polygon(9px_0,100%_0,100%_100%,0_100%,0_10px)]">
            <Dots cols={2} rows={7} className="ml-[4px]" />
            <div className="ml-[42px]"><Patch name="V1.1" /></div>
            <div className="ml-[6px] flex gap-[5px]">
              <MiniBtn>
                <svg width="16" height="11" viewBox="0 0 16 11">
                  <path d="M0 5.500Q4 1 8 0.500q5 .5 8 4.500-3 5-8 5.500-5-.5-8-5z" fill="#0e0e0e" />
                  <path d="M1 5.500Q4.500 2 8 1.600q4 .4 6.500 3.400Q12 8.600 8 9.200 4 8.500 1 5.500z" fill="#757575" />
                  <circle cx="8" cy="5.300" r="3" fill="#141414" />
                  <circle cx="6.800" cy="4" r="1.400" fill="#eee" />
                </svg>
              </MiniBtn>
              <MiniBtn><LockIcon /></MiniBtn>
              <MiniBtn><SyncIcon /></MiniBtn>
              <MiniBtn className="w-[21px] pr-[2px] bg-[#3d1518]"><span className="text-[#b5b5b5]">P</span></MiniBtn>
            </div>
          </div>
        </div>
        <div className="h-[6px] mt-px bg-[#3a3a3a] border-b border-[#121212]" />
        <div className="mt-px ml-[2px] h-[76px] flex bg-linear-to-b from-[#3a4542] to-[#303c39] shadow-[inset_0_1px_0_#52605c] [clip-path:polygon(9px_0,100%_0,100%_100%,0_100%,0_10px)]">
          <Dots cols={2} rows={16} className="ml-[4px] mt-[8px]" />
          <div className="ml-[4px] w-[38px] flex flex-col">
            <svg className="mt-[17px]" width="10" height="6"><path d="M0 0h10L5 6z" fill="#d8d8d8" /></svg>
            <svg className="mt-[30px]" width="28" height="10" viewBox="0 0 28 10">
              <path d="M2 3.500L4 1.500h5.500l2 2M2 6.500L4 8.500h5.500l2-2M16.500 3.500l2-2H24l2 2M16.500 6.500l2 2H24l2-2" fill="none" stroke="#a8a8a8" strokeWidth="1.500" />
              <path d="M0 5h7M9.500 5h9M21 5h7" stroke="#d0d0d0" strokeWidth="1.500" />
            </svg>
          </div>
          <div className="flex flex-col gap-[18px] mt-[9px]">
            <Patch name="A1.L" />
            <Patch name="A1.R" />
          </div>
          <div className="ml-[6px] mt-[28px] flex gap-[5px]">
            <MiniBtn>
              <svg width="13" height="14" viewBox="0 0 13 14"><path d="M0 6h5l6-5.500v13L5 9H0z" fill="#a0a0a0" stroke="#161616" strokeWidth="0.6" /></svg>
            </MiniBtn>
            <MiniBtn><LockIcon /></MiniBtn>
            <MiniBtn><SyncIcon /></MiniBtn>
            <MiniBtn className="w-[28px] pr-[3px]">1-2</MiniBtn>
          </div>
        </div>
      </div>
      <div className="flex gap-[9px] pl-[2px] pt-[2px] border-t border-[#4c4c4c]">
        <MiniBtn className="w-[62px] pr-[3px] pt-px">Version+</MiniBtn>
        <MiniBtn className="w-[50px] pr-[2px] pt-px">Track+</MiniBtn>
        <MiniBtn className="w-[50px] pr-[3px] pt-px">Audio+</MiniBtn>
      </div>
    </div>
  );
}

function Canvas() {
  const ticks = Array.from({ length: 16 }, (_, i) => ORIGIN + (i * SECOND_W) / 3);
  return (
    <div className="ml-[4px] w-[1868px] flex flex-col">
      <svg className="shrink-0" width="1863" height="223" viewBox="0 0 1863 223" shapeRendering="crispEdges">
        <rect width="1862" height="209" fill="#212121" />
        <rect width="1862" height="1" fill="#121212" />
        <path d="M0 52.500h1862M0 99.500h1862M0 137.500h1862" stroke="#343434" />
        {ticks.map((x, i) => (
          <path key={i} d={`M${Math.round(x) + 0.5} ${i % 3 === 0 ? 0 : 210}V222`} stroke="#515151" />
        ))}
        <path d="M0 209.500h1862M1862.500 0v210" stroke="#5a5a5a" />
        <rect x={ORIGIN + 1} y="210" width="11" height="13" fill="#4b4734" />
        <path d={`M${ORIGIN + 2} 13.500h10.500v39h-10.500`} fill="none" stroke="#a5a5a5" />
        <rect x={ORIGIN} y="1" width="1" height="222" fill="#d3b93b" />
        <rect x={ORIGIN - 5} y="33" width="11" height="2" fill="#d3b93b" />
      </svg>
      <div className="flex h-[20px] items-center pl-[52px] leading-none">
        {SECONDS.map((s, i) => (
          <span key={s} className="shrink-0" style={{ width: i < 5 ? SECOND_W : undefined }}>{s}</span>
        ))}
      </div>
    </div>
  );
}

function Meter() {
  return (
    <div className="ml-[10px] mt-[9px] flex text-[11px] leading-none text-[#9c9c9c]">
      {[0, 1].map(side => (
        <div key={side} className={clsx('flex flex-col w-[6px] h-[248px] border border-[#b5b5b5]', side === 0 ? 'order-1' : 'order-3')}>
          {METER.slice(1).map(m => (
            <div key={m} className="h-[11.780px] shrink-0 border-b border-[#b5b5b5]" />
          ))}
        </div>
      ))}
      <div className="order-2 w-[22px] -mt-[6px] flex flex-col items-center">
        {METER.map(m => (
          <span key={m} className="h-[11.780px] shrink-0 flex items-center">{m}</span>
        ))}
      </div>
    </div>
  );
}

function TimelinePanel() {
  return (
    <div className="h-[268px] shrink-0 flex pl-[8px] text-[13px] text-[#8f8f8f]">
      <div className="w-[2152px] h-[258px] flex rounded-[3px] border border-[#121212] bg-[#383838] shadow-[inset_0_1px_0_#4c4c4c,0_6px_10px_#141414] pl-[9px] pt-[9px]">
        <TrackList />
        <Canvas />
      </div>
      <div className="ml-[3px] w-[23px] flex flex-col">
        <div className="h-[218px] border border-[#121212] bg-[#232323]" />
        <Btn className="mt-[2px] w-[22px] !h-[19px] justify-center">
          <svg width="8" height="8"><path d="M3 0h2v3h3v2H5v3H3V5H0V3h3z" fill="#c4c4c4" /></svg>
        </Btn>
        <Btn className="w-[22px] !h-[19px] justify-center">
          <svg width="8" height="2"><rect width="8" height="2" fill="#c4c4c4" /></svg>
        </Btn>
      </div>
      <Meter />
    </div>
  );
}

function BottomBar() {
  return (
    <div className="h-[37px] shrink-0 flex items-center border-t border-[#464646] bg-[#2b2b2b] pl-[9px] pr-[8px] text-[13px] leading-none text-[#8f8f8f]">
      <Btn className="w-[109px] pl-[5px] pr-[4px]">
        <svg width="24" height="15" viewBox="0 0 24 15">
          <path d="M3.500 0.500h18v6h-18z" fill="#9a9a9a" stroke="#111" />
          <path d="M0.500 7.500h15v7h-15zM17 7.500h6.500v7H17z" fill="#868686" stroke="#111" />
        </svg>
        <span className="ml-[6px]">Timeline</span>
        <UpDown className="ml-auto" />
      </Btn>
      <GearMenu className="ml-[3px]" />
      <Btn className="ml-[25px] w-[74px] pl-[5px] pr-[4px] justify-between">Options<Down /></Btn>
      <Btn className="ml-[73px] w-[1543px]">
        <div className="w-[41px] pr-px h-full flex items-center justify-center border-r border-[#121212]">
          <svg width="5" height="10"><path d="M5 0v10L0 5z" fill="#9c9c9c" /></svg>
        </div>
        <div className="flex-1 h-full flex items-center">
          <div className="ml-[40px] w-[2px] h-full bg-[#c9b13a]" />
          <Dots cols={8} rows={4} className="ml-[673px]" />
        </div>
        <div className="w-[40px] h-full flex items-center justify-center border-l border-[#121212]">
          <svg width="5" height="10"><path d="M0 0v10l5-5z" fill="#9c9c9c" /></svg>
        </div>
      </Btn>
      <div className="ml-[6px] w-[107px] h-7 flex items-center justify-center rounded-[3px] border border-[#4e4e4e] bg-[#2a2a2a]">10:00:00:00</div>
      <Btn className="ml-auto w-[38px] justify-center"><Magnifier /></Btn>
      <Btn className="ml-[20px] w-[60px]">
        <div className="flex-1 pr-px flex justify-center">
          <svg width="28" height="18" viewBox="0 0 28 18">
            <rect x="1" y="1" width="26" height="16" fill="#3a3a3a" stroke="#b5b5b5" strokeWidth="1.300" />
            <path d="M2.500 9l4.500-4v3h4v2H7v3zM25.500 9L21 5v3h-4v2h4v3zM14 2l4 4h-3v6h3l-4 4-4-4h3V6h-3z" fill="#b5b5b5" />
          </svg>
        </div>
        <div className="w-[18px] h-full flex items-center justify-center border-l border-[#121212]"><Down /></div>
      </Btn>
    </div>
  );
}

/* ---------- module tabs ---------- */

function ModuleBar() {
  const idle = 'w-[107px] h-[24px] flex items-center justify-center rounded-b-[4px] border border-t-0 border-[#454545] bg-[#232323] text-[12px] text-[#8f8f8f]';
  return (
    <div className="h-[34px] shrink-0 flex items-start border-t-2 border-[#858585] bg-black leading-none">
      <div className="mt-[11px] ml-[19px] w-[1041px]"><DoubleUp /></div>
      <div className="flex gap-[3px]">
        <div className={idle}>MediaHub</div>
        <div className={idle}>Conform</div>
        <div className="-mt-[2px] w-[107px] h-[28px] flex items-center justify-center rounded-b-[4px] border-2 border-t-0 border-[#858585] bg-[#2b2b2b] text-[13px] text-[#d8d8d8]">Timeline</div>
        <div className={idle}>Tools</div>
      </div>
      <svg className="ml-auto mt-[17px]" width="25" height="15" viewBox="0 0 25 15">
        <rect x="1" y="1" width="22" height="12.500" rx="1" fill="#111" stroke="#c4c4c4" strokeWidth="1.800" />
        <path d="M3.500 4.500h17M4.500 7.300h15" stroke="#c4c4c4" strokeWidth="1.500" strokeDasharray="2 1.200" />
        <path d="M3.500 10.500h2M7 10.500h10M18.500 10.500h2" stroke="#c4c4c4" strokeWidth="1.500" />
      </svg>
    </div>
  );
}

export default function App() {
  return (
    <div className="w-[2560px] h-[1440px] flex flex-col overflow-hidden bg-[#212121] font-['DejaVu_Sans_Condensed','DejaVu_Sans',sans-serif] font-stretch-semi-condensed whitespace-nowrap">
      <MenuBar />
      <div className="h-[1384px] shrink-0 flex">
        <Sidebar />
        <div className="w-[3px] shrink-0 border-r border-[#111] bg-[#858585]" />
        <div className="w-[2240px] flex flex-col">
          <div className="h-[39px] shrink-0 flex items-end pl-[7px] text-[12px] leading-none text-[#bdbdbd]">
            <div className="w-[212px] h-[33px] -mb-px z-10 border border-b-0 border-[#121212] bg-[#383838]">
              <div className="h-[6px] bg-[#1c2d14]" />
              <div className="pl-[4px] pt-[5px]">Sequence</div>
            </div>
            <div className="ml-[902px] w-[210px] h-[33px] -mb-px z-10 border border-b-0 border-[#121212] bg-[#383838]">
              <div className="h-[6px] bg-[#5e1d1d]" />
              <div className="pl-[4px] pt-[5px]">Untitled Sequence</div>
            </div>
          </div>
          <div className="h-[768px] shrink-0 flex pl-[7px]">
            <Viewer name="Sequence" />
            <Viewer name="Untitled Sequence" active />
          </div>
          <div className="h-[99px] shrink-0 flex">
            <ViewerControls />
            <ViewerControls active />
          </div>
          <ViewerToolbar />
          <div className="h-[2px] shrink-0 bg-[#7f7f7f]" />
          <FxArea />
          <TimelineTabs />
          <TimelinePanel />
          <BottomBar />
        </div>
      </div>
      <ModuleBar />
    </div>
  );
}
